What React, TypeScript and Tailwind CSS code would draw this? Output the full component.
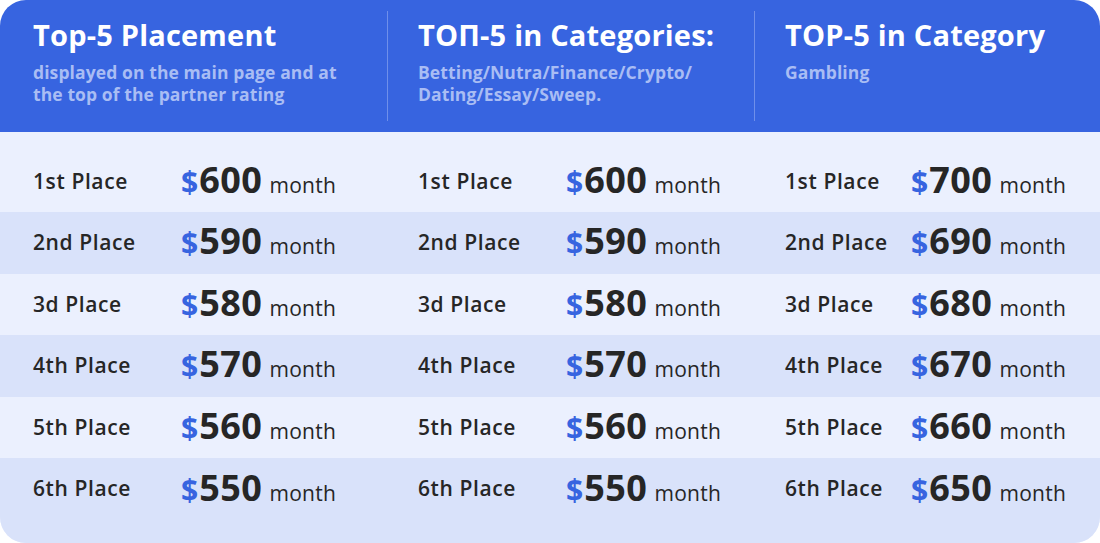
const columns = [
  {
    title: "Top-5 Placement",
    sub: ["displayed on the main page and at", "the top of the partner rating"],
    prices: [600, 590, 580, 570, 560, 550],
    labelW: "w-[148px]",
  },
  {
    title: "ТОП-5 in Categories:",
    sub: ["Betting/Nutra/Finance/Crypto/", "Dating/Essay/Sweep."],
    prices: [600, 590, 580, 570, 560, 550],
    labelW: "w-[148px]",
  },
  {
    title: "TOP-5 in Category",
    sub: ["Gambling"],
    prices: [700, 690, 680, 670, 660, 650],
    labelW: "w-[126px]",
  },
];

const places = ["1st Place", "2nd Place", "3d Place", "4th Place", "5th Place", "6th Place"];

const colWidths = ["w-[388px]", "w-[367px]", "flex-1"];
const padL = ["pl-[33px]", "pl-[30px]", "pl-[30px]"];

export default function App() {
  return (
    <div
      className="w-[1100px] h-[543px] bg-white"
      style={{ fontFamily: "'Open Sans', 'Noto Sans', sans-serif" }}
    >
      <div className="w-full h-full rounded-[26px] overflow-hidden flex flex-col">
        {/* Header */}
        <div className="h-[132px] bg-[#3764e0] flex">
          {columns.map((c, i) => (
            <div
              key={i}
              className={`${colWidths[i]} ${padL[i]} h-full flex items-stretch`}
            >
              <div className="flex-1 pt-[16px]">
                <div className="text-white text-[29px] font-bold leading-[38px] tracking-[0.2px]">
                  {c.title}
                </div>
                <div className="mt-[7px] text-[#a9bdf4] text-[17.5px] font-bold leading-[22px] tracking-[0.1px]">
                  {c.sub.map((s, j) => (
                    <div key={j}>{s}</div>
                  ))}
                </div>
              </div>
              {i < 2 && <div className="w-px my-[11px] bg-[#6f8fea]" />}
            </div>
          ))}
        </div>

        {/* Body */}
        <div className="flex-1 flex flex-col bg-[#ebf0fe]">
          {places.map((p, r) => (
            <div
              key={r}
              className={`flex ${r === 0 ? "h-[80px] pt-[19px]" : r === 5 ? "flex-1" : "h-[61.6px]"} ${
                r % 2 === 1 ? "bg-[#d9e2fa]" : "bg-[#ebf0fe]"
              }`}
            >
              {columns.map((c, i) => (
                <div
                  key={i}
                  className={`${colWidths[i]} ${padL[i]} h-[61.6px] flex items-center`}
                >
                  <div className={`${c.labelW} text-[21px] font-semibold text-[#262626] tracking-[0.6px]`}>
                    {p}
                  </div>
                  <div className="flex items-baseline text-[#262626]">
                    <span className="text-[30px] font-bold text-[#3764e0] mr-[1px]">$</span>
                    <span className="text-[36px] font-bold leading-none tracking-[0.5px]">
                      {c.prices[r]}
                    </span>
                    <span className="ml-[7px] text-[21px] tracking-[0.3px]">month</span>
                  </div>
                </div>
              ))}
            </div>
          ))}
        </div>
      </div>
    </div>
  );
}
